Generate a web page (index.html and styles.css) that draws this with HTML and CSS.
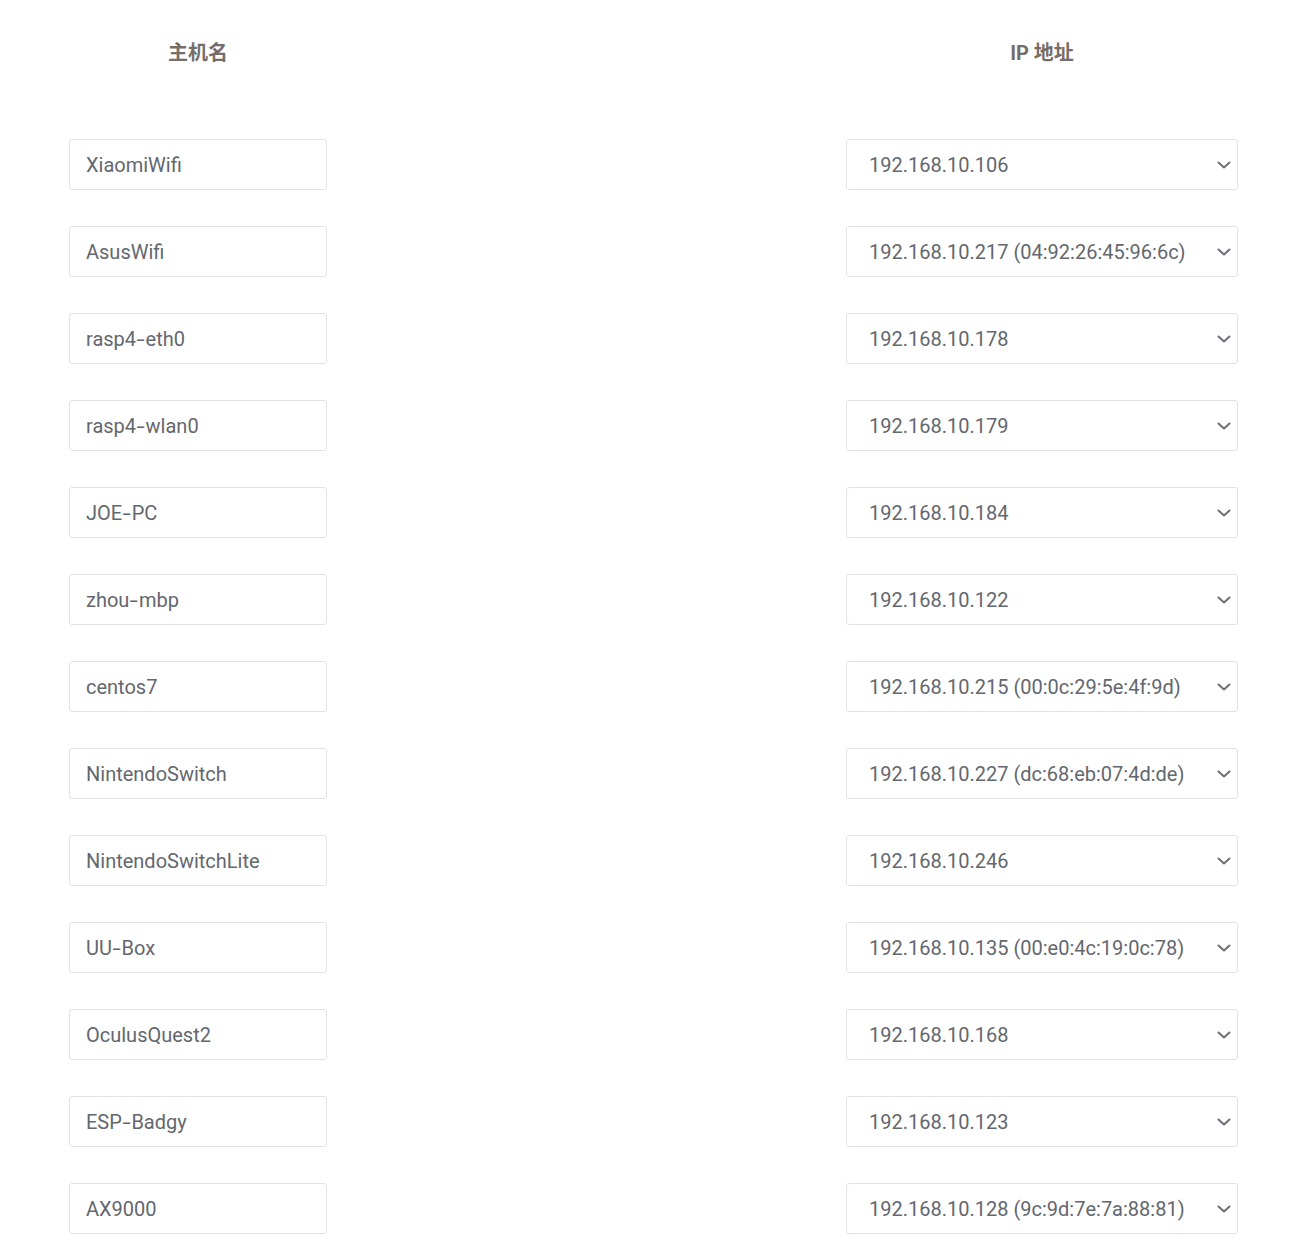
FILE: index.html
```html
<!DOCTYPE html>
<html lang="zh">
<head>
<meta charset="utf-8">
<title>Hosts</title>
<link rel="stylesheet" href="styles.css">
</head>
<body>
<div class="table">
  <div class="th">主机名</div><div></div><div class="th">IP 地址</div>

  <div class="input">XiaomiWifi</div><div></div><div class="select"><span>192.168.10.106</span><svg viewBox="0 0 14 8"><path d="M1.5 1.5 L7 6.5 L12.5 1.5"/></svg></div>
  <div class="input">AsusWifi</div><div></div><div class="select"><span>192.168.10.217 (04:92:26:45:96:6c)</span><svg viewBox="0 0 14 8"><path d="M1.5 1.5 L7 6.5 L12.5 1.5"/></svg></div>
  <div class="input"><span>rasp4<span class="hy">-</span>eth0</span></div><div></div><div class="select"><span>192.168.10.178</span><svg viewBox="0 0 14 8"><path d="M1.5 1.5 L7 6.5 L12.5 1.5"/></svg></div>
  <div class="input"><span>rasp4<span class="hy">-</span>wlan0</span></div><div></div><div class="select"><span>192.168.10.179</span><svg viewBox="0 0 14 8"><path d="M1.5 1.5 L7 6.5 L12.5 1.5"/></svg></div>
  <div class="input"><span>JOE<span class="hy">-</span>PC</span></div><div></div><div class="select"><span>192.168.10.184</span><svg viewBox="0 0 14 8"><path d="M1.5 1.5 L7 6.5 L12.5 1.5"/></svg></div>
  <div class="input"><span>zhou<span class="hy">-</span>mbp</span></div><div></div><div class="select"><span>192.168.10.122</span><svg viewBox="0 0 14 8"><path d="M1.5 1.5 L7 6.5 L12.5 1.5"/></svg></div>
  <div class="input">centos7</div><div></div><div class="select"><span>192.168.10.215 (00:0c:29:5e:4f:9d)</span><svg viewBox="0 0 14 8"><path d="M1.5 1.5 L7 6.5 L12.5 1.5"/></svg></div>
  <div class="input">NintendoSwitch</div><div></div><div class="select"><span>192.168.10.227 (dc:68:eb:07:4d:de)</span><svg viewBox="0 0 14 8"><path d="M1.5 1.5 L7 6.5 L12.5 1.5"/></svg></div>
  <div class="input">NintendoSwitchLite</div><div></div><div class="select"><span>192.168.10.246</span><svg viewBox="0 0 14 8"><path d="M1.5 1.5 L7 6.5 L12.5 1.5"/></svg></div>
  <div class="input"><span>UU<span class="hy">-</span>Box</span></div><div></div><div class="select"><span>192.168.10.135 (00:e0:4c:19:0c:78)</span><svg viewBox="0 0 14 8"><path d="M1.5 1.5 L7 6.5 L12.5 1.5"/></svg></div>
  <div class="input">OculusQuest2</div><div></div><div class="select"><span>192.168.10.168</span><svg viewBox="0 0 14 8"><path d="M1.5 1.5 L7 6.5 L12.5 1.5"/></svg></div>
  <div class="input"><span>ESP<span class="hy">-</span>Badgy</span></div><div></div><div class="select"><span>192.168.10.123</span><svg viewBox="0 0 14 8"><path d="M1.5 1.5 L7 6.5 L12.5 1.5"/></svg></div>
  <div class="input">AX9000</div><div></div><div class="select"><span>192.168.10.128 (9c:9d:7e:7a:88:81)</span><svg viewBox="0 0 14 8"><path d="M1.5 1.5 L7 6.5 L12.5 1.5"/></svg></div>
</div>
</body>
</html>
```
FILE: styles.css
```css
html, body {
  margin: 0;
  padding: 0;
  background: #ffffff;
}
body {
  font-family: Roboto, "Noto Sans CJK SC", sans-serif;
}
.table {
  display: grid;
  grid-template-columns: 258px 1fr 392px;
  row-gap: 36px;
  padding: 38px 54px 0 69px;
}
.th {
  text-align: center;
  font-size: 20px;
  font-weight: 700;
  line-height: 30px;
  color: #766d68;
  margin-bottom: 35px;
}
.input, .select {
  box-sizing: border-box;
  height: 51px;
  border: 1px solid #e3e3e3;
  border-radius: 3px;
  font-size: 20px;
  color: #63676e;
  display: flex;
  align-items: center;
  background: #fff;
}
.input {
  padding-left: 16px;
}
.hy {
  display: inline-block;
  transform: scaleX(1.5);
  margin: 0 2px;
}
.select {
  padding-left: 22px;
  padding-right: 6px;
  justify-content: space-between;
}
.select svg {
  width: 14px;
  height: 8px;
  margin-top: 1px;
  fill: none;
  stroke: #6b7078;
  stroke-width: 2;
  stroke-linecap: round;
  stroke-linejoin: round;
}
```
